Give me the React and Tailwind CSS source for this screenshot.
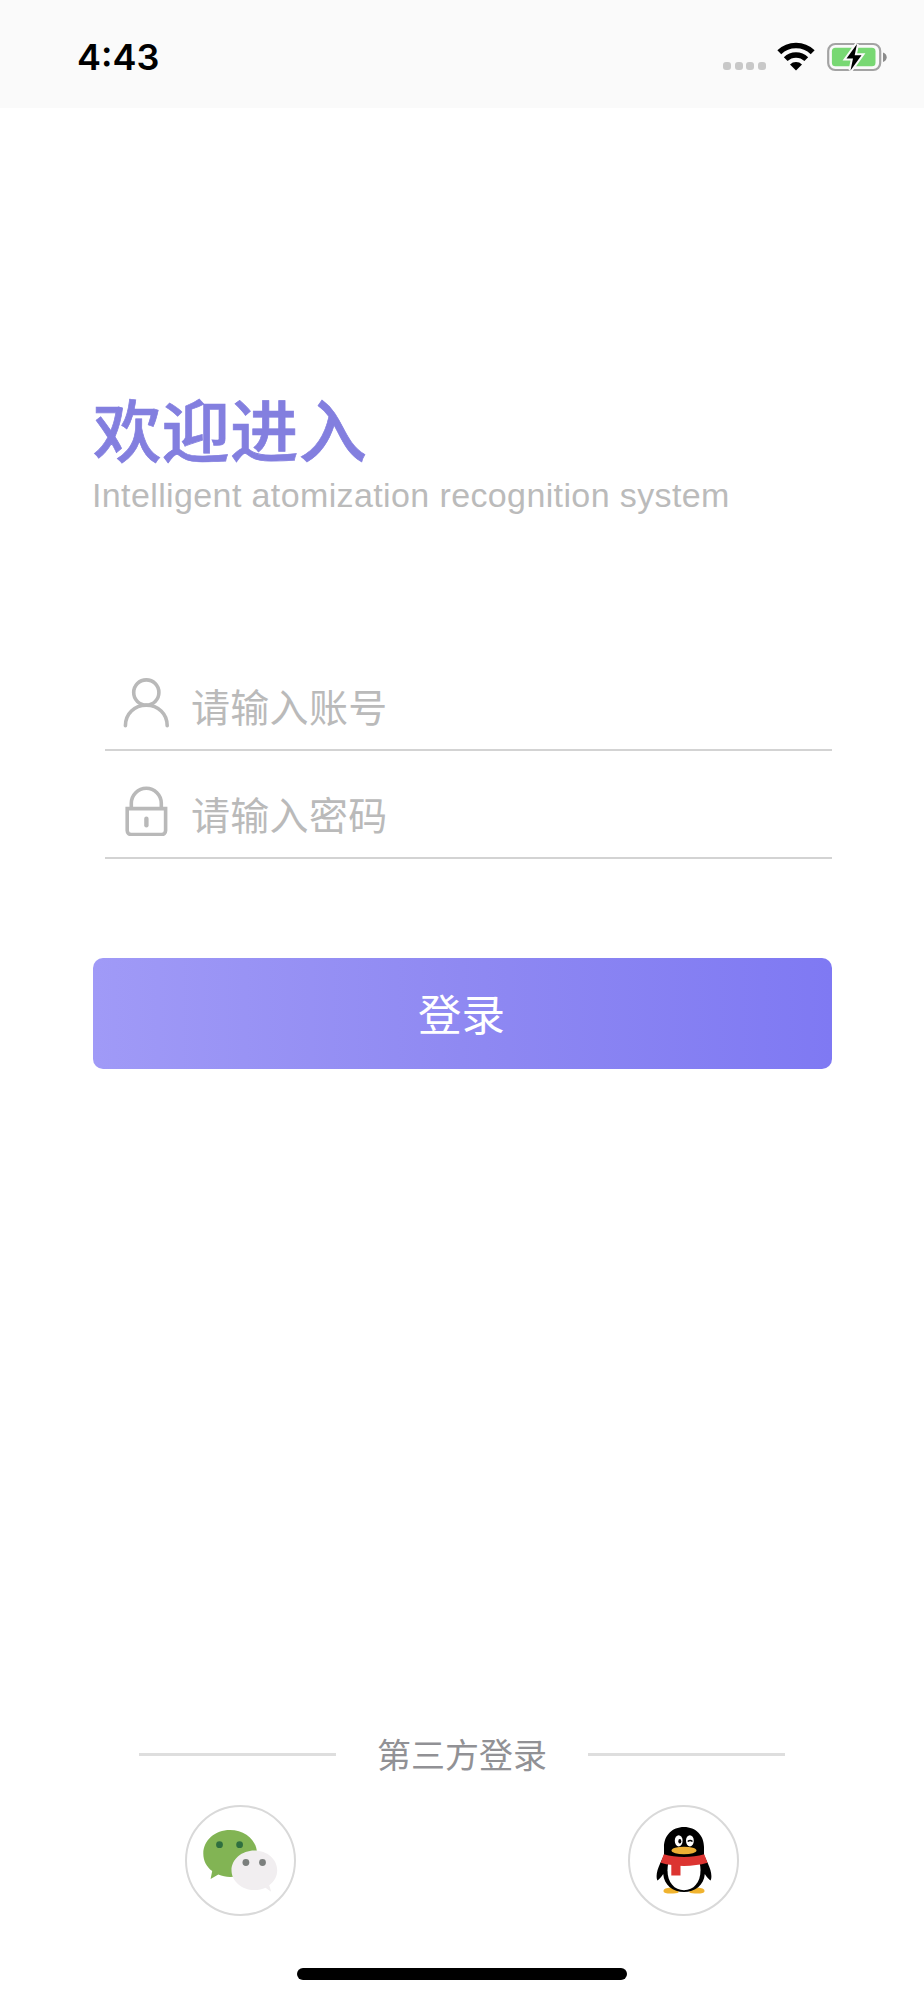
import React, { useState } from "react";

const StatusBar = () => (
  <header className="h-[108px] bg-[#fafafa] flex items-start justify-between pl-[77px] pr-[36px] pt-[35px]">
    <span className="text-[36px] leading-[44px] font-semibold text-black font-['Inter',sans-serif]">
      4:43
    </span>
    <div className="flex items-start pt-[7px]">
      <div className="flex gap-[3.6px] mt-[20px] mr-[11px]">
        <span className="size-2 rounded-[3px] bg-[#c8c8c8]" />
        <span className="size-2 rounded-[3px] bg-[#c8c8c8]" />
        <span className="size-2 rounded-[3px] bg-[#c8c8c8]" />
        <span className="size-2 rounded-[3px] bg-[#c8c8c8]" />
      </div>
      {/* wifi */}
      <svg width="38" height="29" viewBox="0 0 38 29" fill="none">
        <path d="M2.3 10.2a24 24 0 0 1 33.4 0" stroke="#000" strokeWidth="5.600" />
        <path d="M8.700 17.100a14.800 14.800 0 0 1 20.600 0" stroke="#000" strokeWidth="5.400" />
        <path d="M19 28.400l-6-5.900a8.600 8.600 0 0 1 12 0z" fill="#000" />
      </svg>
      {/* battery, charging */}
      <svg className="ml-[12px]" width="61" height="31" viewBox="0 0 61 31" fill="none">
        <rect x="1.200" y="2" width="52" height="26" rx="7" stroke="#a3a3a3" strokeWidth="2.200" />
        <rect x="4.900" y="5.700" width="43.600" height="18.600" rx="3.500" fill="#78d873" />
        <path d="M56 10.400c2.200.7 3.700 2.500 3.700 4.800s-1.500 4.100-3.700 4.800z" fill="#8b8b8b" />
        <path
          d="M30 2L19.500 16.500h6.500L23.500 28.500 34.500 13.300h-6.800z"
          fill="#000"
          stroke="#fafafa"
          strokeWidth="4"
          paintOrder="stroke"
        />
      </svg>
    </div>
  </header>
);

const UserIcon = () => (
  <svg width="46" height="50" viewBox="0 0 46 50" fill="none" stroke="#b9b9b9" strokeWidth="3.600" strokeLinecap="round">
    <circle cx="23.300" cy="14.500" r="12.600" />
    <path d="M2.400 47.800C2.400 35.500 11.500 27.300 23.300 27.300S44.200 35.500 44.200 47.800" />
  </svg>
);

const LockIcon = () => (
  <svg width="46" height="50" viewBox="0 0 46 50" fill="none" stroke="#b9b9b9" strokeWidth="3.600">
    <path d="M8.300 22V17.300a15 15 0 0 1 30 0V22" />
    <path d="M4.200 22.600H42.600V44.600a4 4 0 0 1-4 4H8.200a4 4 0 0 1-4-4z" />
    <path d="M23.400 32.800V39.200" strokeWidth="4.400" strokeLinecap="round" />
  </svg>
);

const WechatIcon = () => (
  <svg width="75" height="62" viewBox="0 0 75 62">
    <path
      d="M27 0C12 0 .3 10.200.3 23.500c0 7.500 3.200 13.300 8.900 17.600L7.600 49l7.700-4.400c3.700 1.600 7.700 2.300 11.700 2.300 15 0 27-10.200 27-23.400S42 0 27 0z"
      fill="#82b454"
    />
    <circle cx="16.500" cy="14.700" r="3.400" fill="#2f6f3f" />
    <circle cx="36.600" cy="14.700" r="3.400" fill="#2f6f3f" />
    <path
      d="M51.500 20.500c-12.700 0-23 8.800-23 19.800s10.300 19.800 23 19.800c4 0 7.700-.8 11-2.400l5.700 4-2-6.400c5-3.600 8-8.900 8-15 0-11-10-19.800-22.700-19.800z"
      fill="#f1eef0"
    />
    <circle cx="42.900" cy="32.500" r="3.400" fill="#7b7f7d" />
    <circle cx="59.500" cy="32.500" r="3.400" fill="#7b7f7d" />
  </svg>
);

const QQIcon = () => (
  <svg width="56" height="67" viewBox="0 0 56 67">
    <path d="M7.500 64c0-2 3-3.200 7-3.200h8v4.700c-1 .7-4 1-8 1s-7-.5-7-2.500z" fill="#f0b32f" />
    <path d="M48.500 64c0-2-3-3.200-7-3.200h-8v4.700c1 .7 4 1 8 1s7-.5 7-2.500z" fill="#f0b32f" />
    {/* body and wings */}
    <path
      d="M28 0C16 0 8 8.700 8 20v8L4.300 36C2 41 .6 45.500.6 49c0 2.300.4 4.500 1 4.500 1.700-1.200 4-4 5.600-6.500C8 58 17 65 28 65s20-7 20.800-18c1.600 2.500 3.900 5.300 5.600 6.500.6 0 1-2.200 1-4.500 0-3.500-1.400-8-3.700-13L48 28v-8C48 8.700 40 0 28 0z"
      fill="#000"
    />
    <path d="M12.300 36h31.400c.6 2.500.8 5 .8 7.500 0 12-7 19.700-16.500 19.700S11.500 55.500 11.500 43.500c0-2.500.2-5 .8-7.500z" fill="#fff" />
    <path d="M7.800 27.300c12.500 3.600 28 3.600 40.400 0l3.300 8.500C37 40 19 40 4.700 35.800z" fill="#dc3431" />
    <path d="M15.300 37h9.200V48.500h-9.200z" fill="#dc3431" />
    <ellipse cx="22.700" cy="13.800" rx="3.900" ry="5.600" fill="#fff" />
    <ellipse cx="33.900" cy="13.800" rx="3.900" ry="5.600" fill="#fff" />
    <ellipse cx="23.800" cy="14.200" rx="1.500" ry="2.300" fill="#000" />
    <path d="M31.700 14.500q2.500-2 4.800 0" stroke="#000" strokeWidth="1.600" fill="none" />
    <ellipse cx="28" cy="23.500" rx="12.500" ry="3.800" fill="#ecaf35" />
  </svg>
);

const App = () => {
  const [account, setAccount] = useState("");
  const [password, setPassword] = useState("");

  return (
    <div className="w-[924px] h-[2000px] bg-white flex flex-col overflow-hidden font-['Liberation_Sans','Noto_Sans_CJK_SC',sans-serif]">
      <StatusBar />

      <main className="flex flex-col pl-[93px] pr-[92px] pt-[270px]">
        <h1 className="text-[68.5px] leading-[100px] h-[93px] font-medium text-[#837fdf] whitespace-nowrap [-webkit-text-stroke:0.7px_#837fdf] font-['Noto_Sans_CJK_SC',sans-serif]">
          欢迎进入
        </h1>
        <p className="text-[34px] leading-[48px] tracking-[0.38px] -ml-px text-[#bbbbbb] whitespace-nowrap">
          Intelligent atomization recognition system
        </p>

        <form className="flex flex-col mt-[124px]" onSubmit={(e) => e.preventDefault()}>
          <label className="ml-3 h-[108px] flex items-start pl-[18px] pt-[35px] border-b-2 border-[#d3d3d3]">
            <UserIcon />
            <input
              className="ml-[22px] -mt-[2px] h-[58px] flex-1 text-[39px] tracking-[0.3px] outline-none placeholder:text-[#bababa] placeholder:opacity-100 font-['Noto_Sans_CJK_SC',sans-serif]"
              placeholder="请输入账号"
              value={account}
              onChange={(e) => setAccount(e.target.value)}
            />
          </label>
          <label className="ml-3 h-[108px] flex items-start pl-[18px] pt-[35px] border-b-2 border-[#d3d3d3]">
            <LockIcon />
            <input
              type="password"
              className="ml-[22px] -mt-[2px] h-[58px] flex-1 text-[39px] tracking-[0.3px] outline-none placeholder:text-[#bababa] placeholder:opacity-100 font-['Noto_Sans_CJK_SC',sans-serif]"
              placeholder="请输入密码"
              value={password}
              onChange={(e) => setPassword(e.target.value)}
            />
          </label>
          <button
            type="submit"
            className="mt-[99px] h-[111px] pb-[2px] pr-[2px] rounded-[10px] bg-linear-to-r from-[#a09af7] via-[#8f89f2] to-[#7f79f3] text-white text-[43.5px] leading-[64px] font-['Noto_Sans_CJK_SC',sans-serif]"
          >
            登录
          </button>
        </form>
      </main>

      <footer className="mt-auto flex flex-col items-center">
        <div className="w-[646px] flex items-center justify-between">
          <span className="w-[197px] h-[3px] bg-[#dedede]" />
          <span className="text-[34px] leading-[50px] text-[#919195] font-['Noto_Sans_CJK_SC',sans-serif]">
            第三方登录
          </span>
          <span className="w-[197px] h-[3px] bg-[#dedede]" />
        </div>
        <div className="w-[554px] mt-[26px] flex justify-between">
          <button className="size-[111px] rounded-full border-2 border-[#d9d9d9] flex items-center justify-center">
            <WechatIcon />
          </button>
          <button className="size-[111px] rounded-full border-2 border-[#d9d9d9] flex items-center justify-center">
            <QQIcon />
          </button>
        </div>
        <div className="mt-[52px] mb-5 w-[330px] h-[12px] rounded-full bg-black" />
      </footer>
    </div>
  );
};

export default App;
